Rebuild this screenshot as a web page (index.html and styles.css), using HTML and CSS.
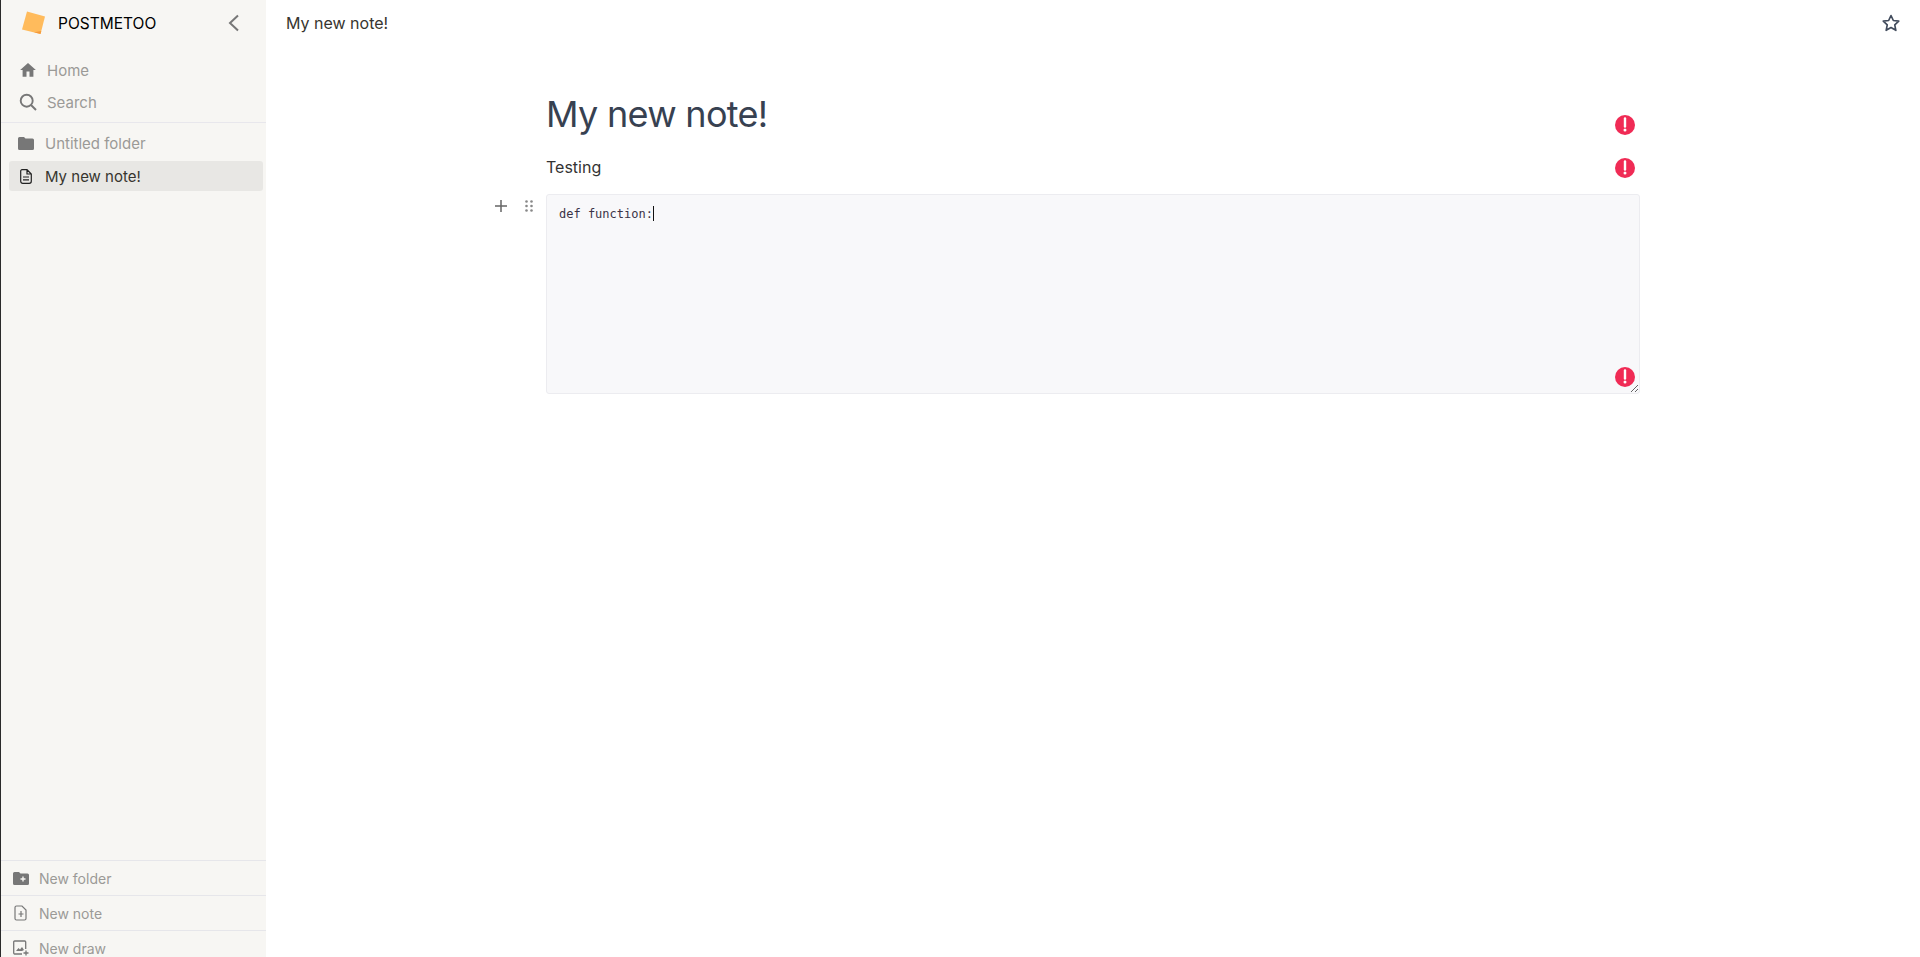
FILE: index.html
```html
<!DOCTYPE html>
<html lang="en">
<head>
  <meta charset="UTF-8" />
  <title>My new note!</title>
  <link rel="stylesheet" href="styles.css">
</head>
<body>
  <div class="app">
    <aside class="sidebar">
      <div class="brand">
        <svg class="logo" width="26" height="26" viewBox="0 0 26 26"><path d="M7 1.500 25 6.500 20.500 24 2 19.500Z" fill="#ffbb5c"/><path d="M14 22.300 20.500 24 21.300 21Z" fill="#f59a3c"/></svg>
        <span class="brand-name">POSTMETOO</span>
        <svg class="collapse" width="14" height="18" viewBox="0 0 14 18"><path d="M11 1.500 3 9l8 7.500" fill="none" stroke="#777" stroke-width="2"/></svg>
      </div>

      <nav class="nav">
        <a class="nav-item">
          <svg width="18" height="18" viewBox="0 0 24 24"><path d="M10 21v-7h4v7h5.200v-9H22.500L12 2.500 1.500 12h3.300v9z" fill="#777"/></svg>
          Home
        </a>
        <a class="nav-item">
          <svg width="18" height="18" viewBox="0 0 18 18"><circle cx="7.700" cy="7.700" r="6" fill="none" stroke="#777" stroke-width="1.900"/><path d="m12 12 5 5" stroke="#777" stroke-width="2"/></svg>
          Search
        </a>
      </nav>

      <div class="tree">
        <a class="tree-item">
          <span class="tree-icon"><svg width="16" height="13" viewBox="0 0 16 13"><path d="M1.500 0H6l1.500 1.500h7A1.500 1.500 0 0 1 16 3v8.500a1.500 1.500 0 0 1-1.500 1.500h-13A1.500 1.500 0 0 1 0 11.500v-10A1.500 1.500 0 0 1 1.500 0z" fill="#777"/></svg></span>
          Untitled folder
        </a>
        <a class="tree-item active">
          <span class="tree-icon"><svg width="12" height="15" viewBox="0 0 12 15"><path d="M2 .7h5L11.300 5v7.300A2 2 0 0 1 9.300 14.300H2.700A2 2 0 0 1 .7 12.300V2A1.300 1.300 0 0 1 2 .7z M7 .7V5h4.300 M3 8h6 M3 10.800h6" fill="none" stroke="#222" stroke-width="1.200"/></svg></span>
          My new note!
        </a>
      </div>

      <div class="spacer"></div>

      <div class="side-foot">
        <a class="foot-item">
          <svg width="16" height="13" viewBox="0 0 16 13"><path d="M1.500 0H6l1.500 1.500h7A1.500 1.500 0 0 1 16 3v8.500a1.500 1.500 0 0 1-1.500 1.500h-13A1.500 1.500 0 0 1 0 11.500v-10A1.500 1.500 0 0 1 1.500 0z" fill="#777"/><path d="M10 4.500v5M7.500 7h5" stroke="#f7f6f3" stroke-width="1.400"/></svg>
          New folder
        </a>
        <a class="foot-item">
          <svg width="16" height="16" viewBox="0 0 16 16"><path d="M3.500 1H9l4 4v8.500a1.500 1.500 0 0 1-1.500 1.500h-8A1.500 1.500 0 0 1 2 13.500v-11A1.500 1.500 0 0 1 3.500 1z M8 6v6M5.500 9h5" fill="none" stroke="#777" stroke-width="1.200"/></svg>
          New note
        </a>
        <a class="foot-item">
          <svg width="16" height="16" viewBox="0 0 16 16"><path d="M9 14H1.500A1 1 0 0 1 .7 13V2A1 1 0 0 1 1.700 1h10a1 1 0 0 1 1 1v7" fill="none" stroke="#777" stroke-width="1.300"/><path d="M3 11l2.500-3 1.500 1.500L9 7l2 3-2 1z" fill="#777"/><path d="M13 10.500v5M10.500 13h5" stroke="#777" stroke-width="1.300"/></svg>
          New draw
        </a>
      </div>
    </aside>

    <main class="main">
      <header class="topbar">
        <span class="crumb">My new note!</span>
        <svg width="20" height="20" viewBox="0 0 24 24"><path d="M12 3l2.800 6 6.500.8-4.800 4.500 1.300 6.500L12 17.500l-5.800 3.300 1.300-6.500-4.800-4.500 6.500-.8z" fill="none" stroke="#414b5c" stroke-width="2" stroke-linejoin="round"/></svg>
      </header>

      <div class="editor">
        <div class="block title-block">
          <h1 class="title">My new note!</h1>
          <svg class="err" width="22" height="22" viewBox="0 0 22 22"><circle cx="11" cy="11" r="10" fill="#f02b55"/><path d="M11 4.500v8" stroke="#fff" stroke-width="2.400" stroke-linecap="round"/><circle cx="11" cy="16" r="1.500" fill="#fff"/></svg>
        </div>
        <div class="block text-block">
          <p class="para">Testing</p>
          <svg class="err" width="22" height="22" viewBox="0 0 22 22"><circle cx="11" cy="11" r="10" fill="#f02b55"/><path d="M11 4.500v8" stroke="#fff" stroke-width="2.400" stroke-linecap="round"/><circle cx="11" cy="16" r="1.500" fill="#fff"/></svg>
        </div>
        <div class="block code-block">
          <div class="handles">
            <svg width="14" height="14" viewBox="0 0 14 14"><path d="M7 1v12M1 7h12" stroke="#666" stroke-width="1.500"/></svg>
            <svg width="10" height="14" viewBox="0 0 10 14" fill="#888"><circle cx="2.500" cy="2.500" r="1.300"/><circle cx="7.500" cy="2.500" r="1.300"/><circle cx="2.500" cy="7" r="1.300"/><circle cx="7.500" cy="7" r="1.300"/><circle cx="2.500" cy="11.500" r="1.300"/><circle cx="7.500" cy="11.500" r="1.300"/></svg>
          </div>
          <div class="code">def function:<span class="caret"></span></div>
          <svg class="err" width="22" height="22" viewBox="0 0 22 22"><circle cx="11" cy="11" r="10" fill="#f02b55"/><path d="M11 4.500v8" stroke="#fff" stroke-width="2.400" stroke-linecap="round"/><circle cx="11" cy="16" r="1.500" fill="#fff"/></svg>
        </div>
      </div>
    </main>
  </div>
</body>
</html>
```

FILE: styles.css
```css
html, body {
  margin: 0;
  height: 100%;
  overflow: hidden;
  background: #fff;
  font-family: Inter, 'Noto Sans', sans-serif;
}

a { cursor: pointer; }

.app {
  display: flex;
  height: 957px;
  border-left: 1px solid #2a2a2a;
}

/* Sidebar */
.sidebar {
  width: 265px;
  flex: none;
  display: flex;
  flex-direction: column;
  background: #f7f6f3;
  font-size: 15px;
  color: #9b9a97;
}

.brand {
  display: flex;
  align-items: center;
  height: 46px;
  padding: 0 25px 0 19px;
}

.brand-name {
  margin-left: 12px;
  flex: 1;
  font-size: 15.5px;
  color: #000;
}

.nav {
  padding-bottom: 4px;
  padding-top: 8px;
  border-bottom: 1px solid #e8e7ec;
}

.nav-item {
  display: flex;
  align-items: center;
  gap: 10px;
  height: 32px;
  padding-left: 18px;
}

.tree { padding: 5px 3px 0 8px; }

.tree-item {
  display: flex;
  align-items: center;
  gap: 11px;
  height: 30px;
  padding-left: 9px;
  margin-bottom: 3px;
  border-radius: 3px;
}

.tree-icon {
  display: flex;
  justify-content: center;
  width: 16px;
}

.tree-item.active {
  background: #e8e7e4;
  color: #37352f;
}

.spacer { flex: 1; }

.side-foot {
  height: 97px;
  overflow: hidden;
  font-size: 14px;
}

.foot-item {
  display: flex;
  align-items: center;
  gap: 10px;
  height: 34px;
  padding-left: 12px;
  border-top: 1px solid #e6e6ea;
}

/* Main */
.main {
  flex: 1;
  min-width: 0;
}

.topbar {
  display: flex;
  justify-content: space-between;
  align-items: center;
  height: 46px;
  padding: 0 19px 0 20px;
  font-size: 16px;
  color: #37352f;
}

.editor {
  width: 1094px;
  margin-left: 280px;
  padding-top: 44px;
}

.block { position: relative; }

.err {
  position: absolute;
  right: 4px;
}

.title {
  margin: 0;
  font-size: 36px;
  line-height: 48px;
  font-weight: 400;
  letter-spacing: -0.7px;
  color: #374151;
}

.title-block { height: 58px; }
.title-block .err { top: 24px; }

.para {
  margin: 0;
  font-size: 16px;
  line-height: 24px;
  color: #333;
}

.text-block {
  height: 46px;
  padding-top: 7px;
  box-sizing: border-box;
}
.text-block .err { top: 9px; }

.handles {
  position: absolute;
  left: -52px;
  top: 5px;
  display: flex;
  gap: 16px;
  align-items: center;
}

.code {
  height: 200px;
  padding: 10px 12px;
  box-sizing: border-box;
  overflow: auto;
  resize: vertical;
  background: #f8f8fa;
  border: 1px solid #ececf0;
  border-radius: 3px;
  font-family: 'DejaVu Sans Mono', monospace;
  font-size: 12px;
  line-height: 18px;
  color: #3b3346;
}

.caret {
  display: inline-block;
  height: 15px;
  border-left: 1px solid #111;
  vertical-align: text-bottom;
}

.code-block .err { bottom: 6px; }
```
